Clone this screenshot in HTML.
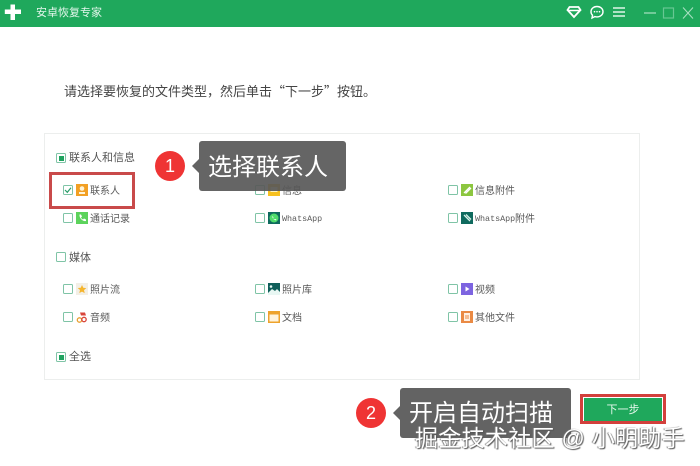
<!DOCTYPE html>
<html lang="zh"><head><meta charset="utf-8">
<style>
html,body{margin:0;padding:0;background:#fff}
body{width:700px;height:466px;position:relative;overflow:hidden;font-family:"Liberation Sans","Noto Sans CJK SC",sans-serif;color:#555}
div,span,svg{position:absolute}
.t{white-space:nowrap;line-height:16px;font-size:10px;color:#5a5a5a}
.r{margin-top:2px}
.m{font-family:"Liberation Mono","Noto Sans CJK SC",monospace;font-size:8.4px;margin-top:1px}
.h{font-size:11px;color:#555}
.c{width:8px;height:8px;border:1px solid #7fc4a6;border-radius:1.5px;background:#fff}
.i{width:12px;height:12px}
.ci{width:5px;height:5px;background:#1fa35f;left:1.500px;top:1.500px}
</style></head><body>
<div style="left:0;top:0;width:700px;height:27px;background:#1fa85c"></div>
<svg style="left:4px;top:3px" width="18" height="18" viewBox="0 0 18 18"><path d="M6.500 1.500h4.500v5h6v4.500h-6v6H6.500v-6H.8V6.500h5.700z" fill="#fff"/></svg>
<div class="t" style="left:36px;top:5px;font-size:11px;color:#e4f6ec;line-height:16px">安卓恢复专家</div>
<svg style="left:566px;top:5px" width="16" height="14" viewBox="0 0 16 14"><path d="M3.500 2h9l2 3-6.500 7L1.500 5z" fill="none" stroke="#fff" stroke-width="1.800"/><path d="M2 5.500h12" stroke="#fff" stroke-width="1.500"/></svg>
<svg style="left:589px;top:5px" width="16" height="15" viewBox="0 0 16 15"><path d="M8 1.500c3.500 0 6 2.300 6 5.200s-2.500 5.200-6 5.200c-.8 0-1.500-.1-2.200-.3L3 13l.5-2.800C2.500 9.300 2 8.100 2 6.700 2 3.800 4.500 1.500 8 1.500z" fill="none" stroke="#fff" stroke-width="1.400"/><circle cx="5.500" cy="6.700" r=".8" fill="#fff"/><circle cx="8" cy="6.700" r=".8" fill="#fff"/><circle cx="10.500" cy="6.700" r=".8" fill="#fff"/></svg>
<svg style="left:612px;top:6px" width="14" height="12" viewBox="0 0 14 12"><path d="M1 2h12M1 6h12M1 10h12" stroke="#dff5e8" stroke-width="1.500"/></svg>
<svg style="left:643px;top:6px" width="52" height="14" viewBox="0 0 52 14"><path d="M1 7h12" stroke="#a9e0c2" stroke-width="1.200"/><rect x="20.500" y="2" width="10" height="10" fill="none" stroke="#67c793" stroke-width="1.200"/><path d="M40 1.500l10 11M50 1.500l-10 11" stroke="#a9e0c2" stroke-width="1"/></svg>

<div class="t" style="left:64px;top:83px;font-size:13px;color:#444;font-family:'Noto Sans CJK SC',sans-serif">请选择要恢复的文件类型，然后单击“下一步”按钮。</div>

<div style="left:44px;top:133px;width:594px;height:245px;border:1px solid #eceeed"></div>

<div class="c" style="left:56px;top:153px"><div class="ci"></div></div>
<div class="t h r" style="left:69px;top:148px">联系人和信息</div>

<div style="left:49px;top:172px;width:80px;height:31px;border:3px solid #c94a4a"></div>
<div class="c" style="left:63px;top:185px"></div>
<svg style="left:63px;top:185px" width="10" height="10" viewBox="0 0 10 10"><path d="M2 5l2.300 2.300 3.700-4.500" fill="none" stroke="#2a9d6a" stroke-width="1.200"/></svg>
<svg class="i" style="left:76px;top:184px" viewBox="0 0 12 12"><rect width="12" height="12" fill="#f2a024"/><circle cx="6" cy="4.500" r="2.300" fill="#fff3d6"/><rect x="3" y="8" width="6" height="2" fill="#fff3d6"/></svg>
<div class="t r" style="left:90px;top:182px">联系人</div>

<div class="c" style="left:255px;top:185px"></div>
<svg class="i" style="left:268px;top:184px" viewBox="0 0 12 12"><rect width="12" height="12" fill="#f7c11f"/><rect x="2.500" y="3" width="7" height="5" fill="#fff3c0"/></svg>
<div class="t r" style="left:282px;top:182px">信息</div>

<div class="c" style="left:448px;top:185px"></div>
<svg class="i" style="left:461px;top:184px" viewBox="0 0 12 12"><rect width="12" height="12" fill="#8cc63f"/><path d="M3 9l6-6M4.500 9.500L10 4" stroke="#fff" stroke-width="1.300"/></svg>
<div class="t r" style="left:475px;top:182px">信息附件</div>

<div class="c" style="left:63px;top:213px"></div>
<svg class="i" style="left:76px;top:212px" viewBox="0 0 12 12"><rect width="12" height="12" fill="#5cd35c"/><path d="M3.500 2.500l1.500 0 1 2-1 1c.5 1 1 1.500 2 2l1-1 2 1v1.500c-3 1-7-3-6.500-6.500z" fill="#fff"/></svg>
<div class="t r" style="left:90px;top:210px">通话记录</div>

<div class="c" style="left:255px;top:213px"></div>
<svg class="i" style="left:268px;top:212px" viewBox="0 0 12 12"><rect width="12" height="12" fill="#0f6a5e"/><circle cx="6" cy="6" r="4.500" fill="#4fdc6a"/><path d="M4.500 3.800l1 1.700-.5.600c.4.700.8 1 1.400 1.300l.6-.5 1.500.8c-.5 1.500-4.800-.5-4-3.900z" fill="#fff"/></svg>
<div class="t m" style="left:282px;top:210px">WhatsApp</div>

<div class="c" style="left:448px;top:213px"></div>
<svg class="i" style="left:461px;top:212px" viewBox="0 0 12 12"><rect width="12" height="12" fill="#0f6a5e"/><path d="M3 3l6 6M5 2.500l5 5" stroke="#d8f3ea" stroke-width="1.300"/></svg>
<div class="t m" style="left:475px;top:210px">WhatsApp</div>
<div class="t r" style="left:515px;top:210px">附件</div>

<div class="c" style="left:56px;top:252px"></div>
<div class="t h r" style="left:69px;top:248px">媒体</div>

<div class="c" style="left:63px;top:284px"></div>
<svg class="i" style="left:76px;top:283px" viewBox="0 0 12 12"><rect width="12" height="12" fill="#f3efe6"/><path d="M6 2l1.300 2.800 3 .3-2.300 2 .7 3L6 8.600 3.300 10l.7-3-2.300-2 3-.3z" fill="#f5b52e"/></svg>
<div class="t r" style="left:90px;top:281px">照片流</div>

<div class="c" style="left:255px;top:284px"></div>
<svg class="i" style="left:268px;top:283px" viewBox="0 0 12 12"><rect width="12" height="12" fill="#0f5f5a"/><path d="M0 10l4-4 3 2 2-2 3 3v3H0z" fill="#e8f7f3"/><circle cx="3" cy="3.500" r="1.300" fill="#e8f7f3"/></svg>
<div class="t r" style="left:282px;top:281px">照片库</div>

<div class="c" style="left:448px;top:284px"></div>
<svg class="i" style="left:461px;top:283px" viewBox="0 0 12 12"><rect width="12" height="12" fill="#7d64e0"/><path d="M4.500 3.500l4 2.500-4 2.500z" fill="#fff"/></svg>
<div class="t r" style="left:475px;top:281px">视频</div>

<div class="c" style="left:63px;top:312px"></div>
<svg class="i" style="left:76px;top:311px" viewBox="0 0 12 12"><circle cx="3.500" cy="9" r="2.200" fill="none" stroke="#e8a030" stroke-width="1.300"/><circle cx="8" cy="8.500" r="2.200" fill="none" stroke="#d9453a" stroke-width="1.300"/><path d="M4 1.500h5l1 3H5z" fill="#d9453a"/></svg>
<div class="t r" style="left:90px;top:309px">音频</div>

<div class="c" style="left:255px;top:312px"></div>
<svg class="i" style="left:268px;top:311px" viewBox="0 0 12 12"><rect width="12" height="12" fill="#eea32c"/><rect x="1.500" y="3.500" width="9" height="7" fill="#fff3dc"/></svg>
<div class="t r" style="left:282px;top:309px">文档</div>

<div class="c" style="left:448px;top:312px"></div>
<svg class="i" style="left:461px;top:311px" viewBox="0 0 12 12"><rect width="12" height="12" fill="#ea8a44"/><rect x="3" y="2" width="6" height="8" fill="#fff0e2"/><path d="M4 5h4M4 7h4" stroke="#ea8a44"/></svg>
<div class="t r" style="left:475px;top:309px">其他文件</div>

<div class="c" style="left:56px;top:352px"><div class="ci"></div></div>
<div class="t h r" style="left:69px;top:347px">全选</div>

<div style="left:155px;top:151px;width:30px;height:30px;border-radius:50%;background:#ef3434"></div>
<div class="t" style="left:155px;top:151px;width:30px;line-height:30px;text-align:center;color:#fff;font-size:18px">1</div>
<div style="left:199px;top:141px;width:147px;height:50px;background:rgba(88,88,88,.92);border-radius:3px"></div>
<svg style="left:191px;top:158px" width="9" height="16" viewBox="0 0 9 16"><path d="M9 0v16L1 8z" fill="#636363"/></svg>
<div class="t" style="left:208px;top:153px;font-size:24px;line-height:30px;color:#fff">选择联系人</div>

<div style="left:356px;top:398px;width:30px;height:30px;border-radius:50%;background:#ef3434"></div>
<div class="t" style="left:356px;top:398px;width:30px;line-height:30px;text-align:center;color:#fff;font-size:18px">2</div>
<div style="left:400px;top:388px;width:171px;height:50px;background:#636363;border-radius:3px"></div>
<svg style="left:392px;top:405px" width="9" height="16" viewBox="0 0 9 16"><path d="M9 0v16L1 8z" fill="#636363"/></svg>
<div class="t" style="left:409px;top:399px;font-size:24px;line-height:30px;color:#fff">开启自动扫描</div>

<div style="left:580px;top:394px;width:80px;height:24px;border:3px solid #d2403c"></div>
<div style="left:584px;top:398px;width:78px;height:23px;background:#1fa85c"></div>
<div class="t" style="left:584px;top:402px;width:78px;text-align:center;color:#e4f8ec;font-size:11px">下一步</div>

<div class="t" style="left:415px;top:423px;font-size:23px;line-height:30px;color:#fff;letter-spacing:.3px;text-shadow:1px 1px 1px #555,-1px 0 1px #777">掘金技术社区 @ 小明助手</div>
</body></html>
